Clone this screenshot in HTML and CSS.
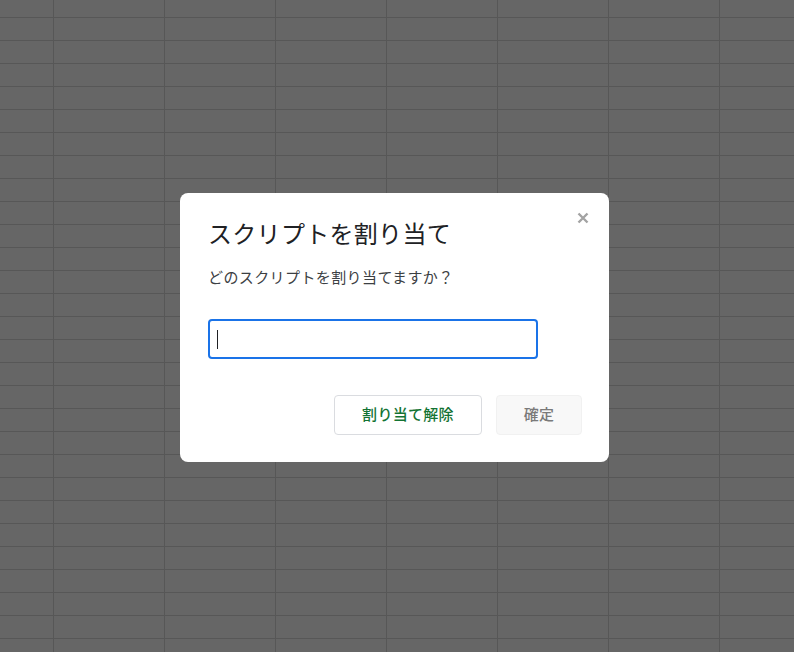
FILE: index.html
```html
<!DOCTYPE html>
<html lang="ja">
<head>
    <meta charset="UTF-8">
    <title>スクリプトを割り当て</title>
    <link rel="stylesheet" href="styles.css">
</head>
<body>
    <div class="sheet">
        <div class="dialog">
            <div class="dialog-head">
                <h1 class="dialog-title">スクリプトを割り当て</h1>
                <span class="close" title="閉じる">
                    <svg width="12" height="12" viewBox="0 0 12 12">
                        <path d="M1.5 1.5 L10.5 10.5 M10.5 1.5 L1.5 10.5" stroke="#a3a3a3" stroke-width="2.4" stroke-linecap="butt"/>
                    </svg>
                </span>
            </div>
            <p class="dialog-text">どのスクリプトを割り当てますか？</p>
            <div class="field"><span class="caret"></span></div>
            <div class="actions">
                <button class="btn btn-outline">割り当て解除</button>
                <button class="btn btn-disabled">確定</button>
            </div>
        </div>
    </div>
</body>
</html>
```

FILE: styles.css
```css
html, body {
    margin: 0;
    height: 100%;
}
body {
    font-family: "Noto Sans CJK JP", "Noto Sans", Roboto, sans-serif;
}
.sheet {
    box-sizing: border-box;
    height: 100%;
    padding: 193px 0 0 180px;
    background-color: #666666;
    background-image:
        linear-gradient(to right, #575757 1px, transparent 1px),
        linear-gradient(to bottom, #575757 1px, transparent 1px);
    background-size: 111px 23px;
    background-position: 53px 17px;
}
.dialog {
    box-sizing: border-box;
    width: 429px;
    height: 269px;
    background: #fff;
    border-radius: 8px;
    padding: 24px 27px 27px 28px;
    display: flex;
    flex-direction: column;
}
.dialog-head {
    display: flex;
    justify-content: space-between;
    align-items: flex-start;
}
.dialog-title {
    margin: 0;
    font-size: 24px;
    line-height: 32px;
    font-weight: 400;
    letter-spacing: 0.3px;
    color: #202124;
}
.close {
    display: flex;
    margin-top: -5px;
    margin-right: -7px;
    cursor: pointer;
}
.dialog-text {
    margin: 18px 0 0;
    font-size: 15px;
    line-height: 20px;
    letter-spacing: 0.4px;
    color: #3c4043;
}
.field {
    box-sizing: border-box;
    width: 330px;
    height: 40px;
    margin-top: 32px;
    border: 2px solid #1a73e8;
    border-radius: 4px;
    padding: 9px 0 0 7px;
}
.caret {
    display: block;
    width: 1px;
    height: 19px;
    background: #202124;
}
.actions {
    margin-top: auto;
    display: flex;
    justify-content: flex-end;
    gap: 14px;
}
.btn {
    box-sizing: border-box;
    height: 40px;
    border-radius: 4px;
    font-family: inherit;
    font-size: 15px;
    font-weight: 500;
    letter-spacing: 0.3px;
    padding: 0 0 4px;
}
.btn-outline {
    width: 148px;
    background: #fff;
    border: 1px solid #dadce0;
    color: #137333;
}
.btn-disabled {
    width: 86px;
    background: #f8f8f8;
    border: 1px solid #f1f1f1;
    color: #7a7a7a;
}
```
